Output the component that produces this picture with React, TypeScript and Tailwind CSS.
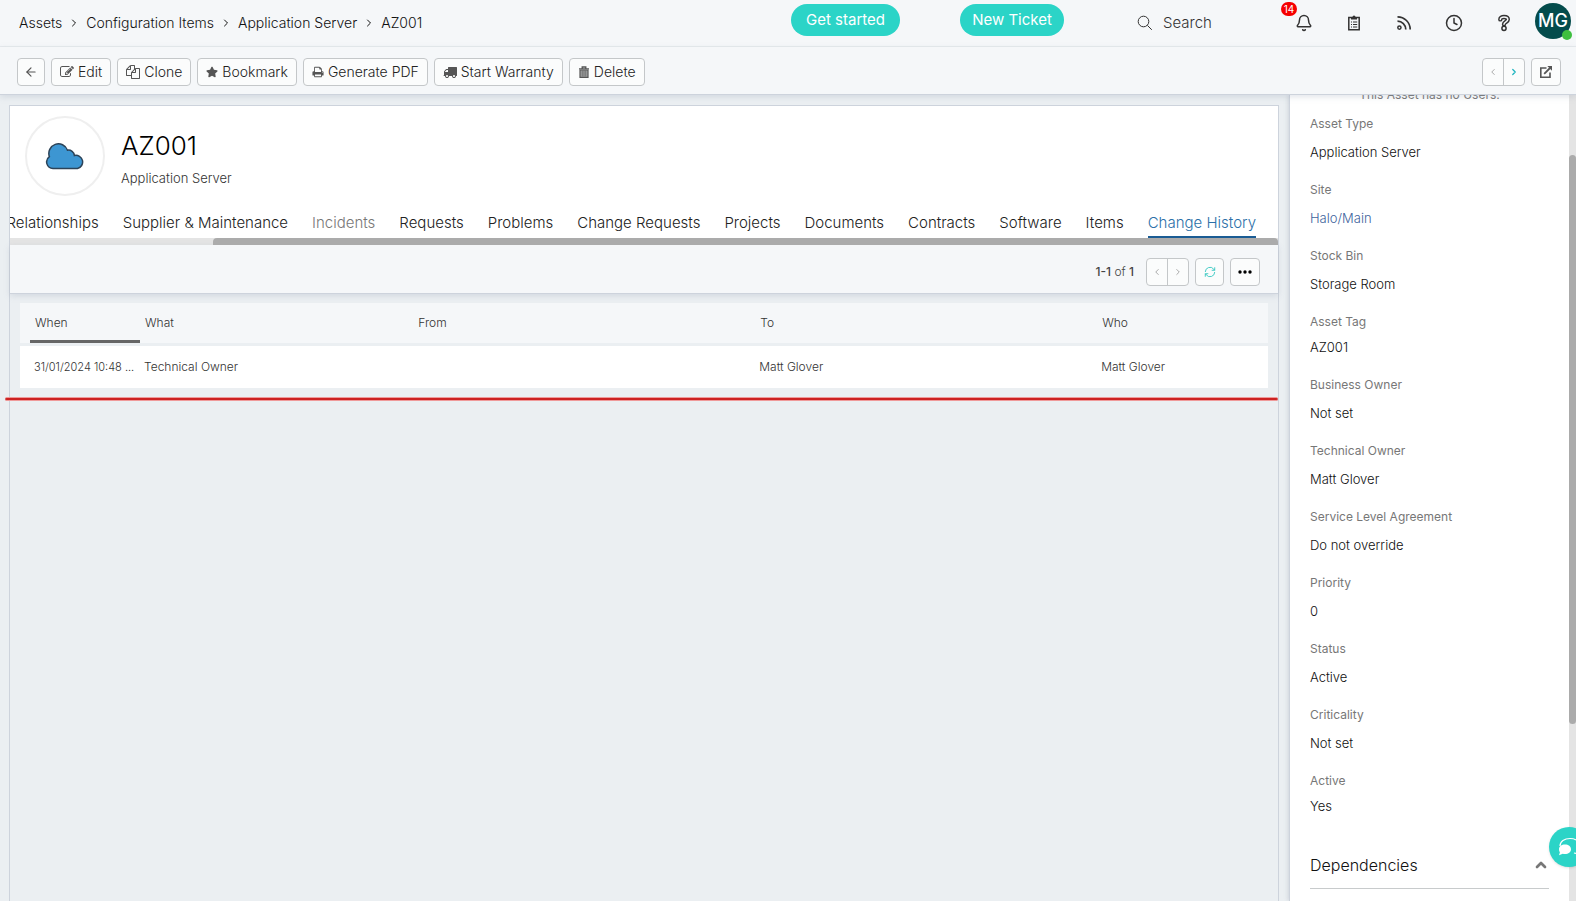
import type { ReactNode } from "react";
import clsx from "clsx";
import { ArrowLeft, Bell, ChevronLeft, ChevronRight, ChevronUp, Clock } from "lucide-react";
import { FaStar } from "react-icons/fa";

interface IconProps {
  className?: string;
}

const EditIcon = ({ className }: IconProps) => (
  <svg viewBox="0 0 1792 1792" fill="currentColor" className={className}>
    <path d="M888 1184l116-116-152-152-116 116v56h96v96h56zm440-720q-16-16-33 1l-350 350q-17 17-1 33t33-1l350-350q17-17 1-33zm80 594v190q0 119-84.500 203.500t-203.500 84.500h-832q-119 0-203.500-84.500t-84.500-203.500v-832q0-119 84.500-203.500t203.500-84.500h832q63 0 117 25 15 7 18 23 3 17-9 29l-49 49q-14 14-32 8-23-6-45-6h-832q-66 0-113 47t-47 113v832q0 66 47 113t113 47h832q66 0 113-47t47-113v-126q0-13 9-22l64-64q15-15 35-7t20 29zm-96-738l288 288-672 672h-288v-288zm444 132l-92 92-288-288 92-92q28-28 68-28t68 28l152 152q28 28 28 68t-28 68z" />
  </svg>
);

const CloneIcon = ({ className }: IconProps) => (
  <svg viewBox="0 0 1792 1792" fill="currentColor" className={className}>
    <path d="M1696 384q40 0 68 28t28 68v1216q0 40-28 68t-68 28h-960q-40 0-68-28t-28-68v-288h-544q-40 0-68-28t-28-68v-672q0-40 20-88t48-76l408-408q28-28 76-48t88-20h416q40 0 68 28t28 68v328q68-40 128-40h416zm-544 213l-299 299h299v-299zm-640-384l-299 299h299v-299zm196 647l316-316v-416h-384v416q0 40-28 68t-68 28h-416v640h512v-256q0-40 20-88t48-76zm956 804v-1152h-384v416q0 40-28 68t-68 28h-416v640h896z" />
  </svg>
);

const PrintIcon = ({ className }: IconProps) => (
  <svg viewBox="0 0 1792 1792" fill="currentColor" className={className}>
    <path d="M448 1536h896v-256h-896v256zm0-640h896v-384h-160q-40 0-68-28t-28-68v-160h-640v640zm1152 64q0-26-19-45t-45-19-45 19-19 45 19 45 45 19 45-19 19-45zm128 0v416q0 13-9.500 22.500t-22.500 9.500h-224v160q0 40-28 68t-68 28h-960q-40 0-68-28t-28-68v-160h-224q-13 0-22.500-9.500t-9.500-22.500v-416q0-79 56.500-135.500t135.500-56.500h64v-544q0-40 28-68t68-28h672q40 0 88 20t76 48l152 152q28 28 48 76t20 88v256h64q79 0 135.500 56.500t56.500 135.500z" />
  </svg>
);

const TruckIcon = ({ className }: IconProps) => (
  <svg viewBox="0 0 1792 1792" fill="currentColor" className={className}>
    <path d="M640 1408q0-52-38-90t-90-38-90 38-38 90 38 90 90 38 90-38 38-90zm-384-512h384v-256h-158q-13 0-22 9l-195 195q-9 9-9 22v30zm1280 512q0-52-38-90t-90-38-90 38-38 90 38 90 90 38 90-38 38-90zm256-1088v1024q0 15-4 26.500t-13.500 18.500-16.500 11.500-23.500 6-22.500 2-25.500 0-22.500-.5q0 106-75 181t-181 75-181-75-75-181h-384q0 106-75 181t-181 75-181-75-75-181h-64q-3 0-22.500.5t-25.500 0-22.500-2-23.500-6-16.500-11.500-13.500-18.500-4-26.500q0-26 19-45t45-19v-320q0-8-.5-35t0-38 2.500-34.500 6.500-37 14-30.500 22.500-30l198-198q19-19 50.500-32t58.500-13h160v-192q0-26 19-45t45-19h1024q26 0 45 19t19 45z" />
  </svg>
);

const TrashIcon = ({ className }: IconProps) => (
  <svg viewBox="0 0 12 12" fill="none" stroke="currentColor" className={className}>
    <path d="M1 2.800h10M4.200 2.500V1h3.600v1.500" strokeWidth="1.300" />
    <path d="M2 4h8v7.300H2z" fill="currentColor" fillOpacity="0.500" strokeWidth="1.200" />
    <path d="M4.200 4.500v6M6 4.500v6M7.800 4.500v6" strokeWidth="0.700" />
  </svg>
);

const ExternalIcon = ({ className }: IconProps) => (
  <svg viewBox="0 0 14 14" fill="none" stroke="currentColor" className={className}>
    <path d="M7.500 3H1.800v9.200H11V7.500" strokeWidth="1.600" />
    <path d="M5.200 8.800 11 3" strokeWidth="1.800" />
    <path d="M8.300 1H13v4.700z" fill="currentColor" stroke="none" />
  </svg>
);

const SearchIcon = ({ className }: IconProps) => (
  <svg viewBox="0 0 16 16" fill="none" stroke="currentColor" className={className}>
    <circle cx="6.500" cy="6.500" r="5.300" />
    <path d="m10.400 10.400 4.400 4.400" />
  </svg>
);

const ClipboardIcon = ({ className }: IconProps) => (
  <svg viewBox="0 0 16 18" fill="none" stroke="currentColor" className={className}>
    <path d="M2.800 3.500h10.400v12.200H2.800z" strokeWidth="1.500" />
    <path d="M5 5.500V3h1.500a1.500 1.500 0 0 1 3 0H11v2.500z" fill="currentColor" stroke="none" />
    <path d="M5 8h1M5 10.500h1M5 13h1M7 8h4.200M7 10.500h4.200M7 13h4.200" />
  </svg>
);

const FeedIcon = ({ className }: IconProps) => (
  <svg viewBox="0 0 16 16" fill="none" stroke="currentColor" className={className}>
    <circle cx="3.400" cy="12.600" r="1.600" strokeWidth="1.500" />
    <path d="M1.500 6.200a8.300 8.300 0 0 1 8.300 8.300M1.500 1.800A12.700 12.700 0 0 1 14.200 14.500" strokeWidth="1.700" />
  </svg>
);

const HelpIcon = ({ className }: IconProps) => (
  <svg viewBox="0 0 14 18" fill="none" className={className}>
    <path d="M3.300 5.400C3.300 3.700 4.800 3 7 3s3.800.8 3.800 2.500C10.800 7.800 7 7.800 7 10.300" stroke="currentColor" strokeWidth="4.400" strokeLinecap="round" />
    <path d="M3.300 5.400C3.300 3.700 4.800 3 7 3s3.800.8 3.800 2.500C10.800 7.800 7 7.800 7 10.300" stroke="#f5f7f9" strokeWidth="1.500" strokeLinecap="round" />
    <circle cx="7" cy="14.300" r="2.100" stroke="currentColor" strokeWidth="1.500" fill="#f5f7f9" />
  </svg>
);

const RefreshIcon = ({ className }: IconProps) => (
  <svg viewBox="0 0 14 14" fill="none" stroke="currentColor" className={className}>
    <path d="M1.500 7a5.500 5.500 0 0 1 9.800-3.400L12.500 5M12.500 7a5.500 5.500 0 0 1-9.800 3.400L1.500 9" />
    <path d="M12.500 1.500V5H9M1.500 12.500V9H5" />
  </svg>
);

const CloudIcon = ({ className }: IconProps) => (
  <svg viewBox="0 0 40 28" className={className}>
    <path
      d="M8 26.500a6.500 6.500 0 0 1-3.600-11.800A9.600 9.600 0 0 1 22.500 8.200a6 6 0 0 1 6.900 5.300 6.500 6.500 0 1 1 3.100 13z"
      fill="#3d96d2"
      stroke="#2c4358"
      strokeWidth="1.500"
    />
  </svg>
);

const ChatIcon = ({ className }: IconProps) => (
  <svg viewBox="0 0 24 20" className={className}>
    <path d="M3 9C3 4.500 7.500 1.500 13 1.500S23 4.500 23 9c0 2.500-1 4-2.500 5.300L21.500 17 17 16" fill="none" stroke="#fff" strokeWidth="1.200" />
    <path d="M8 7.500c3.400 0 6 2 6 4.700S11.400 17 8 17c-.8 0-1.500-.1-2.200-.3L2 18.300l.9-3C2.300 14.500 2 13.400 2 12.200c0-2.700 2.600-4.700 6-4.700z" fill="#fff" />
  </svg>
);

const breadcrumbs = ["Assets", "Configuration Items", "Application Server", "AZ001"];

const actions = [
  { label: "Edit", icon: <EditIcon className="size-3.5" /> },
  { label: "Clone", icon: <CloneIcon className="size-3.5" /> },
  { label: "Bookmark", icon: <FaStar className="size-3" /> },
  { label: "Generate PDF", icon: <PrintIcon className="size-3" /> },
  { label: "Start Warranty", icon: <TruckIcon className="size-3.5" /> },
  { label: "Delete", icon: <TrashIcon className="size-3" /> },
];

const tabs = [
  "Relationships",
  "Supplier & Maintenance",
  "Incidents",
  "Requests",
  "Problems",
  "Change Requests",
  "Projects",
  "Documents",
  "Contracts",
  "Software",
  "Items",
  "Change History",
];

const fields = [
  { label: "Asset Type", value: "Application Server" },
  { label: "Site", value: "Halo/Main", link: true },
  { label: "Stock Bin", value: "Storage Room" },
  { label: "Asset Tag", value: "AZ001", compact: true },
  { label: "Business Owner", value: "Not set" },
  { label: "Technical Owner", value: "Matt Glover" },
  { label: "Service Level Agreement", value: "Do not override" },
  { label: "Priority", value: "0" },
  { label: "Status", value: "Active" },
  { label: "Criticality", value: "Not set" },
  { label: "Active", value: "Yes", compact: true },
];

const history = [
  { when: "31/01/2024 10:48 ...", what: "Technical Owner", from: "", to: "Matt Glover", who: "Matt Glover" },
];

function ToolButton({ children, label, className }: { children: ReactNode; label?: string; className?: string }) {
  return (
    <button
      type="button"
      aria-label={label}
      className={clsx(
        "flex h-7 items-center justify-center gap-1 whitespace-nowrap rounded border border-[#c4c7c9] bg-[#fbfcfc] text-sm text-[#555]",
        className,
      )}
    >
      {children}
    </button>
  );
}

function Pager({ nextActive }: { nextActive?: boolean }) {
  return (
    <div className="flex h-7 w-[43px] rounded border border-[#c4c7c9] bg-[#fbfcfc]">
      <button type="button" aria-label="Previous" className="flex flex-1 items-center justify-center border-r border-[#c4c7c9] text-[#999]">
        <ChevronLeft className="size-2.5" />
      </button>
      <button
        type="button"
        aria-label="Next"
        className={clsx("flex flex-1 items-center justify-center", nextActive ? "text-[#1fb5c0]" : "text-[#999]")}
      >
        <ChevronRight className="size-2.5" strokeWidth={nextActive ? 3 : 2} />
      </button>
    </div>
  );
}

function TopBar() {
  return (
    <header className="flex h-[47px] shrink-0 items-center border-b border-[#e6eaed] pr-[5px] pl-[19px]">
      <nav aria-label="Breadcrumb" className="flex w-[772px] shrink-0 items-center gap-1.5 text-sm text-[#111]">
        {breadcrumbs.map((crumb, i) => (
          <div key={crumb} className="flex items-center gap-1.5">
            {i > 0 && <ChevronRight className="size-3" />}
            <a href="#">{crumb}</a>
          </div>
        ))}
      </nav>
      <div className="flex gap-[60px] pb-1.5">
        <button type="button" className="h-8 w-[109px] rounded-full bg-[#2bd4c7] text-[15px] font-normal text-white">
          Get started
        </button>
        <button type="button" className="h-8 w-[104px] rounded-full bg-[#2bd4c7] text-[15px] font-normal text-white">
          New Ticket
        </button>
      </div>
      <label className="ml-auto flex items-center gap-2.5 text-[#333]">
        <SearchIcon className="size-4" />
        <input
          type="search"
          aria-label="Search"
          placeholder="Search"
          className="w-[116px] bg-transparent text-[15px] font-light outline-none placeholder:text-[#333]"
        />
      </label>
      <div className="flex items-center text-[#333]">
        <button type="button" aria-label="Notifications" className="relative flex w-[50px] justify-center">
          <Bell className="size-[18px]" strokeWidth={2} />
          <span className="absolute -top-3 left-0.5 flex h-3.5 w-4 items-center justify-center rounded-full bg-[#f50000] text-[10px] font-normal text-white">
            14
          </span>
        </button>
        <button type="button" aria-label="Tasks" className="flex w-[50px] justify-center">
          <ClipboardIcon className="h-[18px] w-4" />
        </button>
        <button type="button" aria-label="Feed" className="flex w-[50px] justify-center">
          <FeedIcon className="size-4" />
        </button>
        <button type="button" aria-label="Recent" className="flex w-[50px] justify-center">
          <Clock className="size-[18px]" strokeWidth={2} />
        </button>
        <button type="button" aria-label="Help" className="flex w-[50px] justify-center">
          <HelpIcon className="h-[18px] w-3.5" />
        </button>
        <button
          type="button"
          aria-label="Account"
          className="relative ml-1.5 mb-1 flex size-9 items-center justify-center rounded-full bg-[#044c4c] text-lg font-medium text-white"
        >
          MG
          <span className="absolute -right-px -bottom-px size-2.5 rounded-full bg-[#3fbf3f]" />
        </button>
      </div>
    </header>
  );
}

function ActionBar() {
  return (
    <div className="relative z-10 flex h-12 shrink-0 items-center gap-1.5 border-b border-[#cdd3dc] bg-[#f5f7f9] pt-0.5 pr-[15px] pl-[17px] shadow-[0_2px_6px_rgba(140,150,170,0.25)]">
      <ToolButton label="Back" className="w-7">
        <ArrowLeft className="size-3.5" />
      </ToolButton>
      {actions.map(({ label, icon }) => (
        <ToolButton key={label} className="px-2">
          {icon}
          <span className="text-[#222]">{label}</span>
        </ToolButton>
      ))}
      <div className="ml-auto flex gap-1.5">
        <Pager nextActive />
        <ToolButton label="Open in new window" className="w-[30px]">
          <ExternalIcon className="size-3.5" />
        </ToolButton>
      </div>
    </div>
  );
}

function AssetHeader() {
  return (
    <div className="flex h-[107px] items-start gap-4 px-[15px] pt-2.5">
      <div className="flex size-20 shrink-0 items-center justify-center rounded-full border-2 border-[#efefef]">
        <CloudIcon className="h-7 w-10" />
      </div>
      <div className="pt-3">
        <h1 className="text-[26px] leading-9 text-black">AZ001</h1>
        <p className="pt-1 text-[13px] leading-5 text-[#333]">Application Server</p>
      </div>
    </div>
  );
}

function Tabs() {
  return (
    <div className="overflow-hidden">
      <nav aria-label="Asset sections" className="flex h-[25px] justify-end gap-6 pr-[22px] text-[15px] whitespace-nowrap">
        {tabs.map((tab) => (
          <a
            key={tab}
            href="#"
            className={clsx(
              "border-b-2 leading-5",
              tab === "Change History" && "border-[#1a5c94] text-[#2b70a8]",
              tab === "Incidents" && "border-transparent text-[#777]",
              tab !== "Change History" && tab !== "Incidents" && "border-transparent text-[#222]",
            )}
          >
            {tab}
          </a>
        ))}
      </nav>
      <div className="flex h-[7px] justify-end bg-[#e4e4e4]">
        <div className="w-[84%] rounded-t bg-[#ababab]" />
      </div>
    </div>
  );
}

function HistoryTable() {
  return (
    <div className="px-2.5 pt-1.5">
      <table className="w-full table-fixed border-separate border-spacing-x-0 border-spacing-y-[3px] text-left text-[12px] text-[#333]">
        <colgroup>
          <col className="w-[10px]" />
          <col className="w-[110px]" />
          <col className="w-[21.9%]" />
          <col className="w-[27.4%]" />
          <col className="w-[27.4%]" />
          <col />
        </colgroup>
        <thead>
          <tr className="h-10 bg-[#f5f7f9] [&>th]:px-[5px] [&>th]:font-light">
            <td />
            <th className="border-b-[3px] border-[#666] pt-[3px]">When</th>
            <th>What</th>
            <th>From</th>
            <th>To</th>
            <th>Who</th>
          </tr>
        </thead>
        <tbody>
          {history.map((row) => (
            <tr key={row.when} className="h-[42px] bg-white [&>td]:px-1">
              <td />
              <td className="text-[11px] whitespace-nowrap">{row.when}</td>
              <td>{row.what}</td>
              <td>{row.from}</td>
              <td>{row.to}</td>
              <td>{row.who}</td>
            </tr>
          ))}
        </tbody>
      </table>
    </div>
  );
}

function DetailsPanel() {
  return (
    <aside className="flex w-[287px] shrink-0 overflow-hidden border-l border-[#cdd3dc] bg-white shadow-[-1px_0_4px_rgba(140,150,170,0.3)]">
      <div className="min-w-0 flex-1 px-5">
        <p className="-mt-2.5 h-[29px] text-center text-[12px] leading-5 font-normal text-[#777]">This Asset has no Users.</p>
        <dl>
          {fields.map(({ label, value, link, compact }) => (
            <div key={label} className={compact ? "h-[63px]" : "h-[66px]"}>
              <dt className="text-[12px] leading-5 font-normal text-[#777]">{label}</dt>
              <dd className={clsx("text-[13px] leading-5 text-[#111]", compact ? "pt-[5px]" : "pt-2")}>
                {link ? (
                  <a href="#" className="text-[#40639c]">
                    {value}
                  </a>
                ) : (
                  value
                )}
              </dd>
            </div>
          ))}
        </dl>
        <button type="button" className="mt-4 flex h-[39px] w-full items-center justify-between border-b border-[#c8cbcc] pb-2 text-base text-[#111]">
          Dependencies
          <ChevronUp className="size-4 text-[#777]" strokeWidth={4} />
        </button>
      </div>
      <div className="w-[7px] bg-[#e4e4e4] pt-[60px]">
        <div className="h-[569px] rounded-full bg-[#ababab]" />
      </div>
    </aside>
  );
}

export default function App() {
  return (
    <div className="relative flex h-screen flex-col overflow-hidden bg-[#f5f7f9] font-[Inter,sans-serif] font-light">
      <TopBar />
      <ActionBar />
      <div className="flex min-h-0 flex-1 bg-[#ebeff2]">
        <main className="relative mt-2.5 mr-2.5 ml-[9px] min-w-0 flex-1 border border-b-0 border-[#cdd3dc]">
          <div className="bg-white">
            <AssetHeader />
            <Tabs />
          </div>
          <div className="flex h-[49px] items-center justify-end gap-1.5 border-b border-[#cdd3dc] bg-[#f5f7f9] pt-1.5 pr-[18px] shadow-[0_2px_6px_rgba(140,150,170,0.25)]">
            <span className="mr-1.5 text-[12px] text-[#444]">
              <b className="font-medium">1-1</b> of <b className="font-medium">1</b>
            </span>
            <Pager />
            <ToolButton label="Refresh" className="w-[29px]">
              <RefreshIcon className="size-3 text-[#2bc5bd]" />
            </ToolButton>
            <ToolButton label="More" className="w-[30px]">
              <svg viewBox="0 0 14 4" className="h-1 w-3.5 text-black" fill="currentColor">
                <circle cx="2" cy="2" r="1.700" />
                <circle cx="7" cy="2" r="1.700" />
                <circle cx="12" cy="2" r="1.700" />
              </svg>
            </ToolButton>
          </div>
          <HistoryTable />
          <div className="absolute top-[291px] right-0 -left-[5px] h-1 rounded-full border-y border-[#ef9a9a] bg-[#cc2222]" />
        </main>
        <DetailsPanel />
      </div>
      <button
        type="button"
        aria-label="Chat"
        className="absolute -right-[13px] bottom-[34px] z-20 flex size-10 items-center justify-center rounded-full bg-[#2bd4c7] shadow"
      >
        <ChatIcon className="h-5 w-6" />
      </button>
    </div>
  );
}
